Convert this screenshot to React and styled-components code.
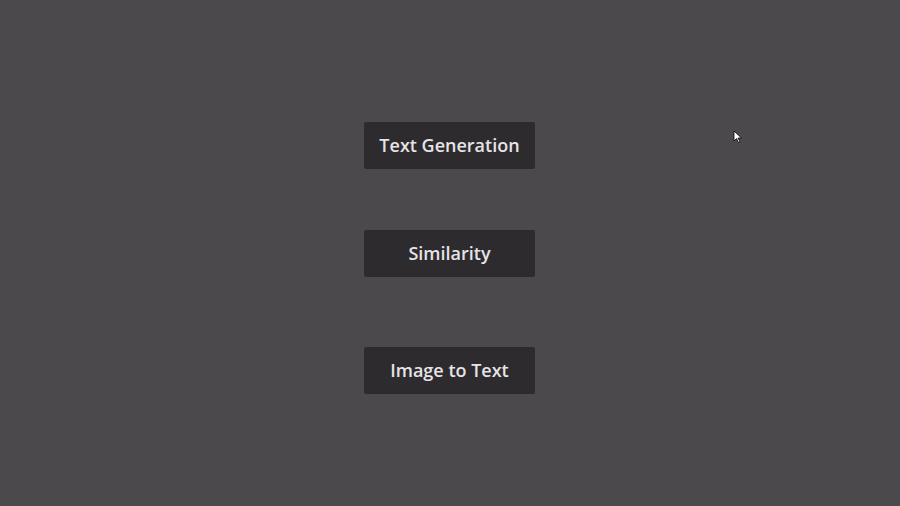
import React from 'react';
import styled, { createGlobalStyle } from 'styled-components';

const GlobalStyle = createGlobalStyle`
    html, body {
        margin: 0;
        padding: 0;
        background: #4b494c;
        font-family: "Open Sans", "Noto Sans", sans-serif;
    }
`

const Page = styled.div`
    position: relative;
    width: 900px;
    height: 506px;
    overflow: hidden;
    background: #4b494c;
`

const Menu = styled.div`
    display: flex;
    flex-direction: column;
    align-items: center;
    padding-top: 122px;
    padding-right: 1px;
`

const MenuButton = styled.button`
    width: 171px;
    height: 47px;
    margin-top: ${props => props.$gap || 0}px;
    padding: 0 0 2px;
    border: none;
    border-radius: 2px;
    background: #2d2b2e;
    color: #e6e4e7;
    font-family: "Open Sans", "Noto Sans", sans-serif;
    font-weight: 600;
    font-size: 18px;
    cursor: pointer;
`

const Cursor = styled.svg`
    position: absolute;
    left: 733px;
    top: 130px;
`

export default function App() {
    return (
        <Page>
            <GlobalStyle />
            <Menu>
                <MenuButton>Text Generation</MenuButton>
                <MenuButton $gap={61}>Similarity</MenuButton>
                <MenuButton $gap={70}>Image to Text</MenuButton>
            </Menu>
            <Cursor width="10" height="14" viewBox="0 0 10 14">
                <path d="M1 1 L1 11 L3.5 8.5 L5.5 12.5 L7 11.8 L5 8 L8.5 8 Z" fill="#fff" stroke="#000" strokeWidth="0.8" />
            </Cursor>
        </Page>
    )
}
